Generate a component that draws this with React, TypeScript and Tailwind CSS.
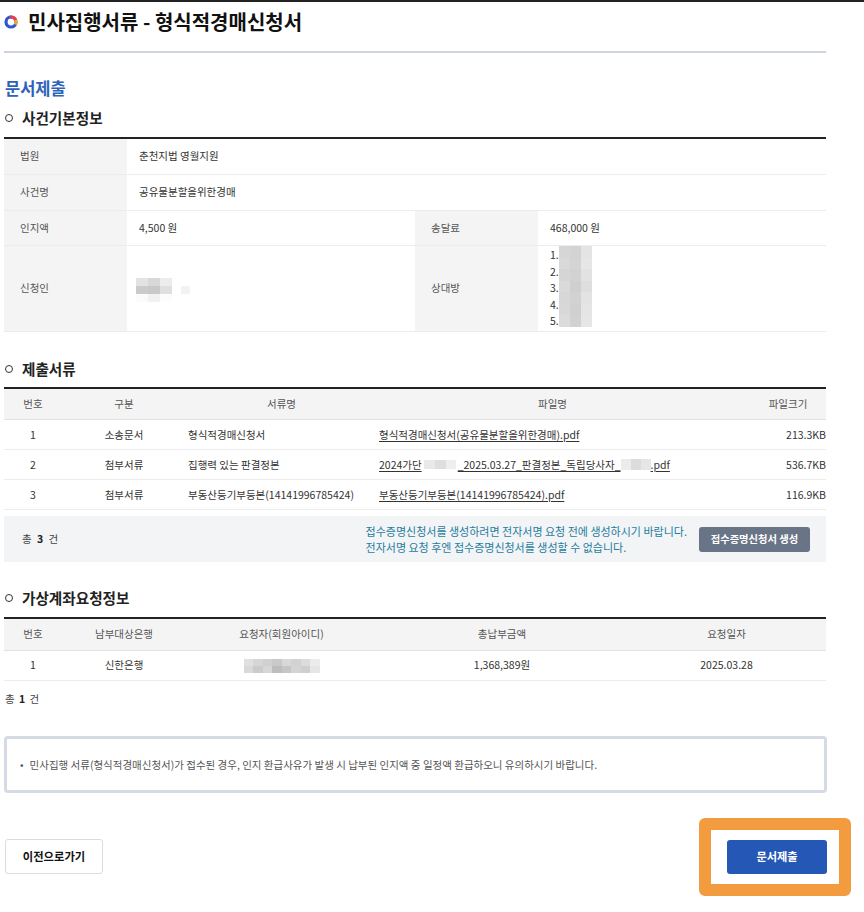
import React from "react";

const Ring = () => (
  <span className="inline-block w-[8px] h-[8px] rounded-full border-[1.5px] border-[#333] shrink-0" />
);

const SectionTitle = ({ children, className }: any) => (
  <div className={`flex items-center gap-[9px] h-[20px] pl-[1px] text-[14.6px] font-bold text-[#222] ${className}`}>
    <Ring />
    <span>{children}</span>
  </div>
);

// blurred (masked) personal data, drawn as pixel blocks
const Pixels = ({ rows, cell }: { rows: string[][]; cell: string }) => (
  <span className="inline-flex flex-col align-middle">
    {rows.map((r, i) => (
      <span key={i} className="flex">
        {r.map((c, j) => (
          <span key={j} className={`${cell} ${c}`} />
        ))}
      </span>
    ))}
  </span>
);

const th = "h-[32px] bg-[#f4f4f4] border-b border-[#e2e2e2] font-normal text-[#555] text-center";
const td = "h-[30px] border-b border-[#ececec] text-[#333]";
const label = "bg-[#f4f4f4] pl-[16px] text-left font-normal text-[#555]";

const App = () => {
  return (
    <div className="w-[864px] min-h-[912px] bg-white border-t-2 border-[#222] font-['Noto_Sans_CJK_KR','Liberation_Sans',sans-serif] text-[10.5px] text-[#333]">
      <div className="pl-[4px] w-[827px]">
        {/* page title */}
        <div className="flex items-center gap-[10px] h-[40px]">
          <svg width="14" height="14" viewBox="0 0 14 14" className="shrink-0">
            <circle cx="7" cy="7" r="5" fill="none" stroke="#2d58cf" strokeWidth="3.2" />
            <path d="M5.3 2.3 A5 5 0 0 1 7 2" fill="none" stroke="#a8449a" strokeWidth="3.2" />
            <path d="M7 2 A5 5 0 0 1 11.6 5" fill="none" stroke="#e8414b" strokeWidth="3.2" />
            <path d="M11.6 5 A5 5 0 0 1 11.3 9.5" fill="none" stroke="#f5a531" strokeWidth="3.2" />
          </svg>
          <h1 className="text-[20px] font-bold text-[#111]">민사집행서류 - 형식적경매신청서</h1>
        </div>
        <div className="mt-[9px] h-[2px] w-[822px] bg-[#cdd4de]" />

        <h2 className="mt-[25px] pl-[1px] text-[16.5px] leading-[20px] font-bold text-[#2d63b8]">문서제출</h2>

        {/* 사건기본정보 */}
        <SectionTitle className="mt-[10px]">사건기본정보</SectionTitle>
        <table className="mt-[9px] w-[822px] table-fixed border-collapse border-t-2 border-[#222]">
          <colgroup>
            <col className="w-[123px]" />
            <col className="w-[288px]" />
            <col className="w-[123px]" />
            <col className="w-[288px]" />
          </colgroup>
          <tbody>
            <tr className="border-b border-[#ececec]">
              <th className={`h-[36px] ${label}`}>법원</th>
              <td colSpan={3} className="pl-[12px]">춘천지법 영월지원</td>
            </tr>
            <tr className="border-b border-[#ececec]">
              <th className={`h-[36px] ${label}`}>사건명</th>
              <td colSpan={3} className="pl-[12px]">공유물분할을위한경매</td>
            </tr>
            <tr className="border-b border-[#ececec]">
              <th className={`h-[35px] ${label}`}>인지액</th>
              <td className="pl-[12px]">4,500 원</td>
              <th className={label}>송달료</th>
              <td className="pl-[12px]">468,000 원</td>
            </tr>
            <tr className="border-b border-[#ececec]">
              <th className={`h-[86px] ${label}`}>신청인</th>
              <td className="pl-[9px]">
                <span className="inline-flex items-center gap-[9px]">
                  <Pixels
                    cell="w-[12px] h-[8px]"
                    rows={[
                      ["bg-[#e3e3e3]", "bg-[#d8d8d8]", "bg-[#ececec]"],
                      ["bg-[#cbcbcb]", "bg-[#c9c9c9]", "bg-[#dfdfdf]"],
                      ["bg-[#fbfbfb]", "bg-[#f1f1f1]", "bg-[#fcfcfc]"],
                    ]}
                  />
                  <span className="w-[9px] h-[8px] bg-[#f3f3f3]" />
                </span>
              </td>
              <th className={label}>상대방</th>
              <td className="pl-[12px]">
                <div className="flex">
                  <div className="leading-[16.5px] pt-[1px]">
                    <div>1.</div>
                    <div>2.</div>
                    <div>3.</div>
                    <div>4.</div>
                    <div>5.</div>
                  </div>
                  <Pixels
                    cell="w-[11px] h-[11.5px]"
                    rows={[
                      ["bg-[#d6d6d6]", "bg-[#d3d3d3]", "bg-[#e4e4e4]"],
                      ["bg-[#d9d9d9]", "bg-[#d4d4d4]", "bg-[#e6e6e6]"],
                      ["bg-[#d5d5d5]", "bg-[#d2d2d2]", "bg-[#e2e2e2]"],
                      ["bg-[#dadada]", "bg-[#cfcfcf]", "bg-[#dedede]"],
                      ["bg-[#d7d7d7]", "bg-[#d2d2d2]", "bg-[#e3e3e3]"],
                      ["bg-[#d8d8d8]", "bg-[#d0d0d0]", "bg-[#e5e5e5]"],
                      ["bg-[#dbdbdb]", "bg-[#d1d1d1]", "bg-[#e6e6e6]"],
                    ]}
                  />
                </div>
              </td>
            </tr>
          </tbody>
        </table>

        {/* 제출서류 */}
        <SectionTitle className="mt-[27px]">제출서류</SectionTitle>
        <table className="mt-[8px] w-[822px] table-fixed border-collapse border-t-2 border-[#222]">
          <colgroup>
            <col className="w-[58px]" />
            <col className="w-[124px]" />
            <col className="w-[191px]" />
            <col className="w-[373px]" />
            <col className="w-[76px]" />
          </colgroup>
          <thead>
            <tr>
              <th className={th}>번호</th>
              <th className={th}>구분</th>
              <th className={th}>서류명</th>
              <th className={`${th} pr-[22px]`}>파일명</th>
              <th className={th}>파일크기</th>
            </tr>
          </thead>
          <tbody>
            <tr>
              <td className={`${td} text-center`}>1</td>
              <td className={`${td} text-center`}>소송문서</td>
              <td className={`${td} pl-[2px]`}>형식적경매신청서</td>
              <td className={`${td} pl-[2px]`}>
                <span className="underline underline-offset-2">형식적경매신청서(공유물분할을위한경매).pdf</span>
              </td>
              <td className={`${td} text-right`}>213.3KB</td>
            </tr>
            <tr>
              <td className={`${td} text-center`}>2</td>
              <td className={`${td} text-center`}>첨부서류</td>
              <td className={`${td} pl-[2px]`}>집행력 있는 판결정본</td>
              <td className={`${td} pl-[2px]`}>
                <span className="inline-flex items-center underline underline-offset-2 whitespace-nowrap">
                  2024가단
                  <span className="inline-flex mx-[2px]">
                    <span className="w-[11px] h-[9px] bg-[#e9e9e9]" />
                    <span className="w-[11px] h-[9px] bg-[#dedede]" />
                    <span className="w-[10px] h-[9px] bg-[#eeeeee]" />
                  </span>
                  _2025.03.27_판결정본_독립당사자_
                  <span className="inline-flex">
                    <span className="w-[10px] h-[11px] bg-[#ececec]" />
                    <span className="w-[10px] h-[11px] bg-[#dcdcdc]" />
                    <span className="w-[10px] h-[11px] bg-[#e6e6e6]" />
                  </span>
                  .pdf
                </span>
              </td>
              <td className={`${td} text-right`}>536.7KB</td>
            </tr>
            <tr>
              <td className={`${td} text-center`}>3</td>
              <td className={`${td} text-center`}>첨부서류</td>
              <td className={`${td} pl-[2px]`}>부동산등기부등본(14141996785424)</td>
              <td className={`${td} pl-[2px]`}>
                <span className="underline underline-offset-2">부동산등기부등본(14141996785424).pdf</span>
              </td>
              <td className={`${td} text-right`}>116.9KB</td>
            </tr>
          </tbody>
        </table>
        <div className="mt-[6px] w-[822px] h-[46px] bg-[#f2f4f6] flex items-center justify-between pl-[18px] pr-[16px]">
          <div className="text-[#444]">
            총 <b className="mx-[3px] text-[#222]">3</b> 건
          </div>
          <div className="flex items-center gap-[12px]">
            <div className="text-[11px] leading-[16px] text-[#1f7d9e]">
              <p>접수증명신청서를 생성하려면 전자서명 요청 전에 생성하시기 바랍니다.</p>
              <p>전자서명 요청 후엔 접수증명신청서를 생성할 수 없습니다.</p>
            </div>
            <button className="h-[25px] w-[111px] rounded-[3px] bg-[#6a7487] text-white text-[10.3px] font-bold">
              접수증명신청서 생성
            </button>
          </div>
        </div>

        {/* 가상계좌요청정보 */}
        <SectionTitle className="mt-[26px]">가상계좌요청정보</SectionTitle>
        <table className="mt-[9px] w-[822px] table-fixed border-collapse border-t-2 border-[#222]">
          <colgroup>
            <col className="w-[58px]" />
            <col className="w-[124px]" />
            <col className="w-[191px]" />
            <col className="w-[250px]" />
            <col className="w-[199px]" />
          </colgroup>
          <thead>
            <tr>
              <th className={`${th} h-[31px]`}>번호</th>
              <th className={th}>남부대상은행</th>
              <th className={th}>요청자(회원아이디)</th>
              <th className={th}>총납부금액</th>
              <th className={th}>요청일자</th>
            </tr>
          </thead>
          <tbody>
            <tr>
              <td className={`${td} text-center`}>1</td>
              <td className={`${td} text-center`}>신한은행</td>
              <td className={`${td} text-center`}>
                <Pixels
                  cell="w-[9.5px] h-[7px]"
                  rows={[
                    ["bg-[#e0e0e0]", "bg-[#d6d6d6]", "bg-[#d0d0d0]", "bg-[#c9c9c9]", "bg-[#d8d8d8]", "bg-[#d2d2d2]", "bg-[#dcdcdc]", "bg-[#ebebeb]"],
                    ["bg-[#d9d9d9]", "bg-[#cbcbcb]", "bg-[#d7d7d7]", "bg-[#bdbdbd]", "bg-[#c6c6c6]", "bg-[#d4d4d4]", "bg-[#cfcfcf]", "bg-[#e6e6e6]"],
                  ]}
                />
              </td>
              <td className={`${td} text-center`}>1,368,389원</td>
              <td className={`${td} text-center`}>2025.03.28</td>
            </tr>
          </tbody>
        </table>
        <div className="mt-[10px] pl-[1px] text-[#444]">
          총 <b className="mx-[2px] text-[#222]">1</b> 건
        </div>

        {/* notice */}
        <div className="mt-[30px] w-[823px] h-[57px] border-[3px] border-[#d5dbe4] rounded-[4px] flex items-center pl-[13px] text-[10.5px] text-[#555]">
          <span className="mr-[6px]">•</span>
          민사집행 서류(형식적경매신청서)가 접수된 경우, 인지 환급사유가 발생 시 납부된 인지액 중 일정액 환급하오니 유의하시기 바랍니다.
        </div>

        {/* buttons */}
        <div className="mt-[46px] flex items-center justify-between pl-[1px]">
          <button className="w-[98px] h-[35px] border border-[#dcdcdc] rounded-[3px] bg-white text-[11.3px] font-bold text-[#111]">
            이전으로가기
          </button>
          <div className="relative">
            <button className="w-[100px] h-[34px] rounded-[3px] bg-[#2557b6] text-white text-[11.2px] font-bold">
              문서제출
            </button>
            <div className="absolute -left-[28px] -top-[22px] -right-[24px] -bottom-[22px] border-[12px] border-[#f39c3f] rounded-[6px] pointer-events-none" />
          </div>
        </div>
      </div>
    </div>
  );
};

export default App;
